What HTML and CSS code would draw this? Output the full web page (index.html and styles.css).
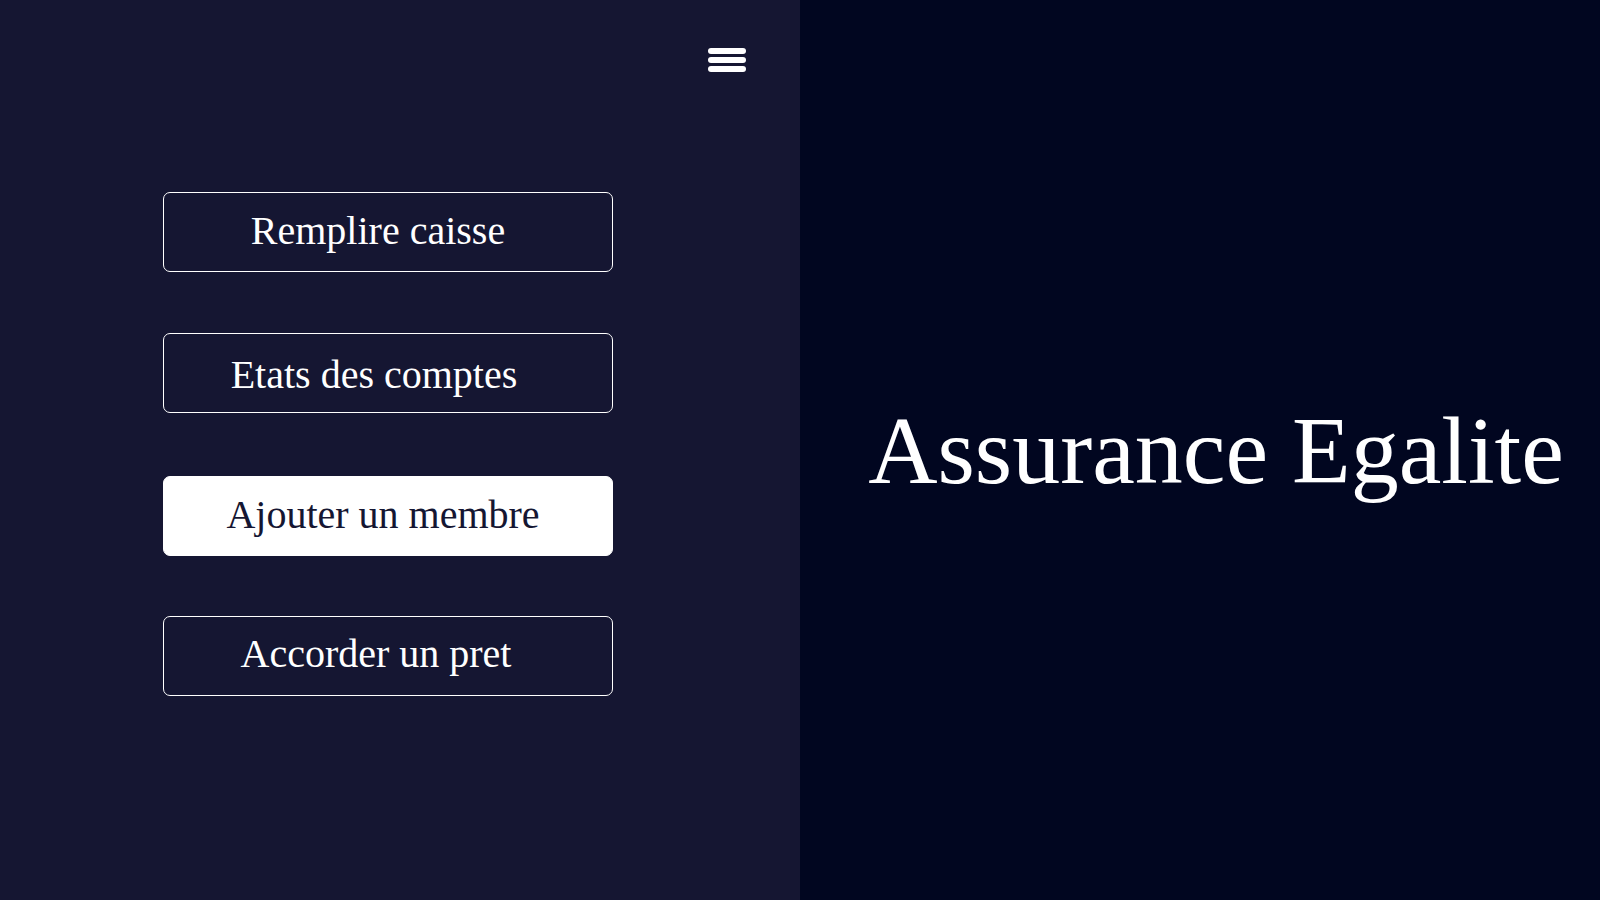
FILE: index.html
```html
<!DOCTYPE html>
<html lang="fr">
<head>
<meta charset="utf-8">
<title>Assurance Egalite</title>
<link rel="stylesheet" href="styles.css">
</head>
<body>
<div class="page">
  <aside class="sidebar">
    <div class="topbar">
      <button class="menu-toggle" aria-label="Menu">
        <svg width="38" height="24" viewBox="0 0 38 24">
          <rect x="0" y="0" width="38" height="6" rx="3" fill="#fff"/>
          <rect x="0" y="9" width="38" height="6" rx="3" fill="#fff"/>
          <rect x="0" y="18" width="38" height="6" rx="3" fill="#fff"/>
        </svg>
      </button>
    </div>
    <nav class="menu">
      <a class="menu-btn shift-a" href="#">Remplire caisse</a>
      <a class="menu-btn shift-b" href="#">Etats des comptes</a>
      <a class="menu-btn menu-btn-active shift-c" href="#">Ajouter un membre</a>
      <a class="menu-btn shift-d" href="#">Accorder un pret</a>
    </nav>
  </aside>
  <main class="hero">
    <h1 class="title">Assurance Egalite</h1>
  </main>
</div>
</body>
</html>
```

FILE: styles.css
```css
html, body {
  margin: 0;
  padding: 0;
  height: 100%;
}
body {
  font-family: "Liberation Serif", "Times New Roman", serif;
  color: #fff;
  background: #010620;
}
.page {
  display: flex;
  height: 900px;
}
.sidebar {
  width: 800px;
  flex: none;
  background: #151632;
  display: flex;
  flex-direction: column;
}
.topbar {
  display: flex;
  justify-content: flex-end;
  padding: 48px 54px 0 0;
}
.menu-toggle {
  background: none;
  border: 0;
  padding: 0;
  margin: 0;
  display: block;
  line-height: 0;
  cursor: pointer;
}
.menu {
  display: flex;
  flex-direction: column;
  gap: 61px;
  margin: 120px 0 0 163px;
  width: 450px;
}
.menu-btn {
  box-sizing: border-box;
  height: 80px;
  border: 1px solid #fff;
  border-radius: 7px;
  display: flex;
  align-items: center;
  justify-content: center;
  color: #fff;
  text-decoration: none;
  font-size: 40px;
}
.menu-btn-active {
  background: #fff;
  color: #151632;
  margin-top: 2px;
  margin-bottom: -1px;
}
.shift-a { padding-right: 20px; padding-bottom: 4px; }
.shift-b { padding-right: 28px; padding-top: 2px; }
.shift-c { padding-right: 10px; padding-bottom: 4px; }
.shift-d { padding-right: 24px; padding-bottom: 5px; }
.hero {
  flex: 1;
  display: flex;
  align-items: center;
  justify-content: center;
  background: #010620;
}
.title {
  margin: 0;
  font-weight: normal;
  font-size: 96px;
  padding: 0 0 0 32px;
  white-space: nowrap;
}
```
